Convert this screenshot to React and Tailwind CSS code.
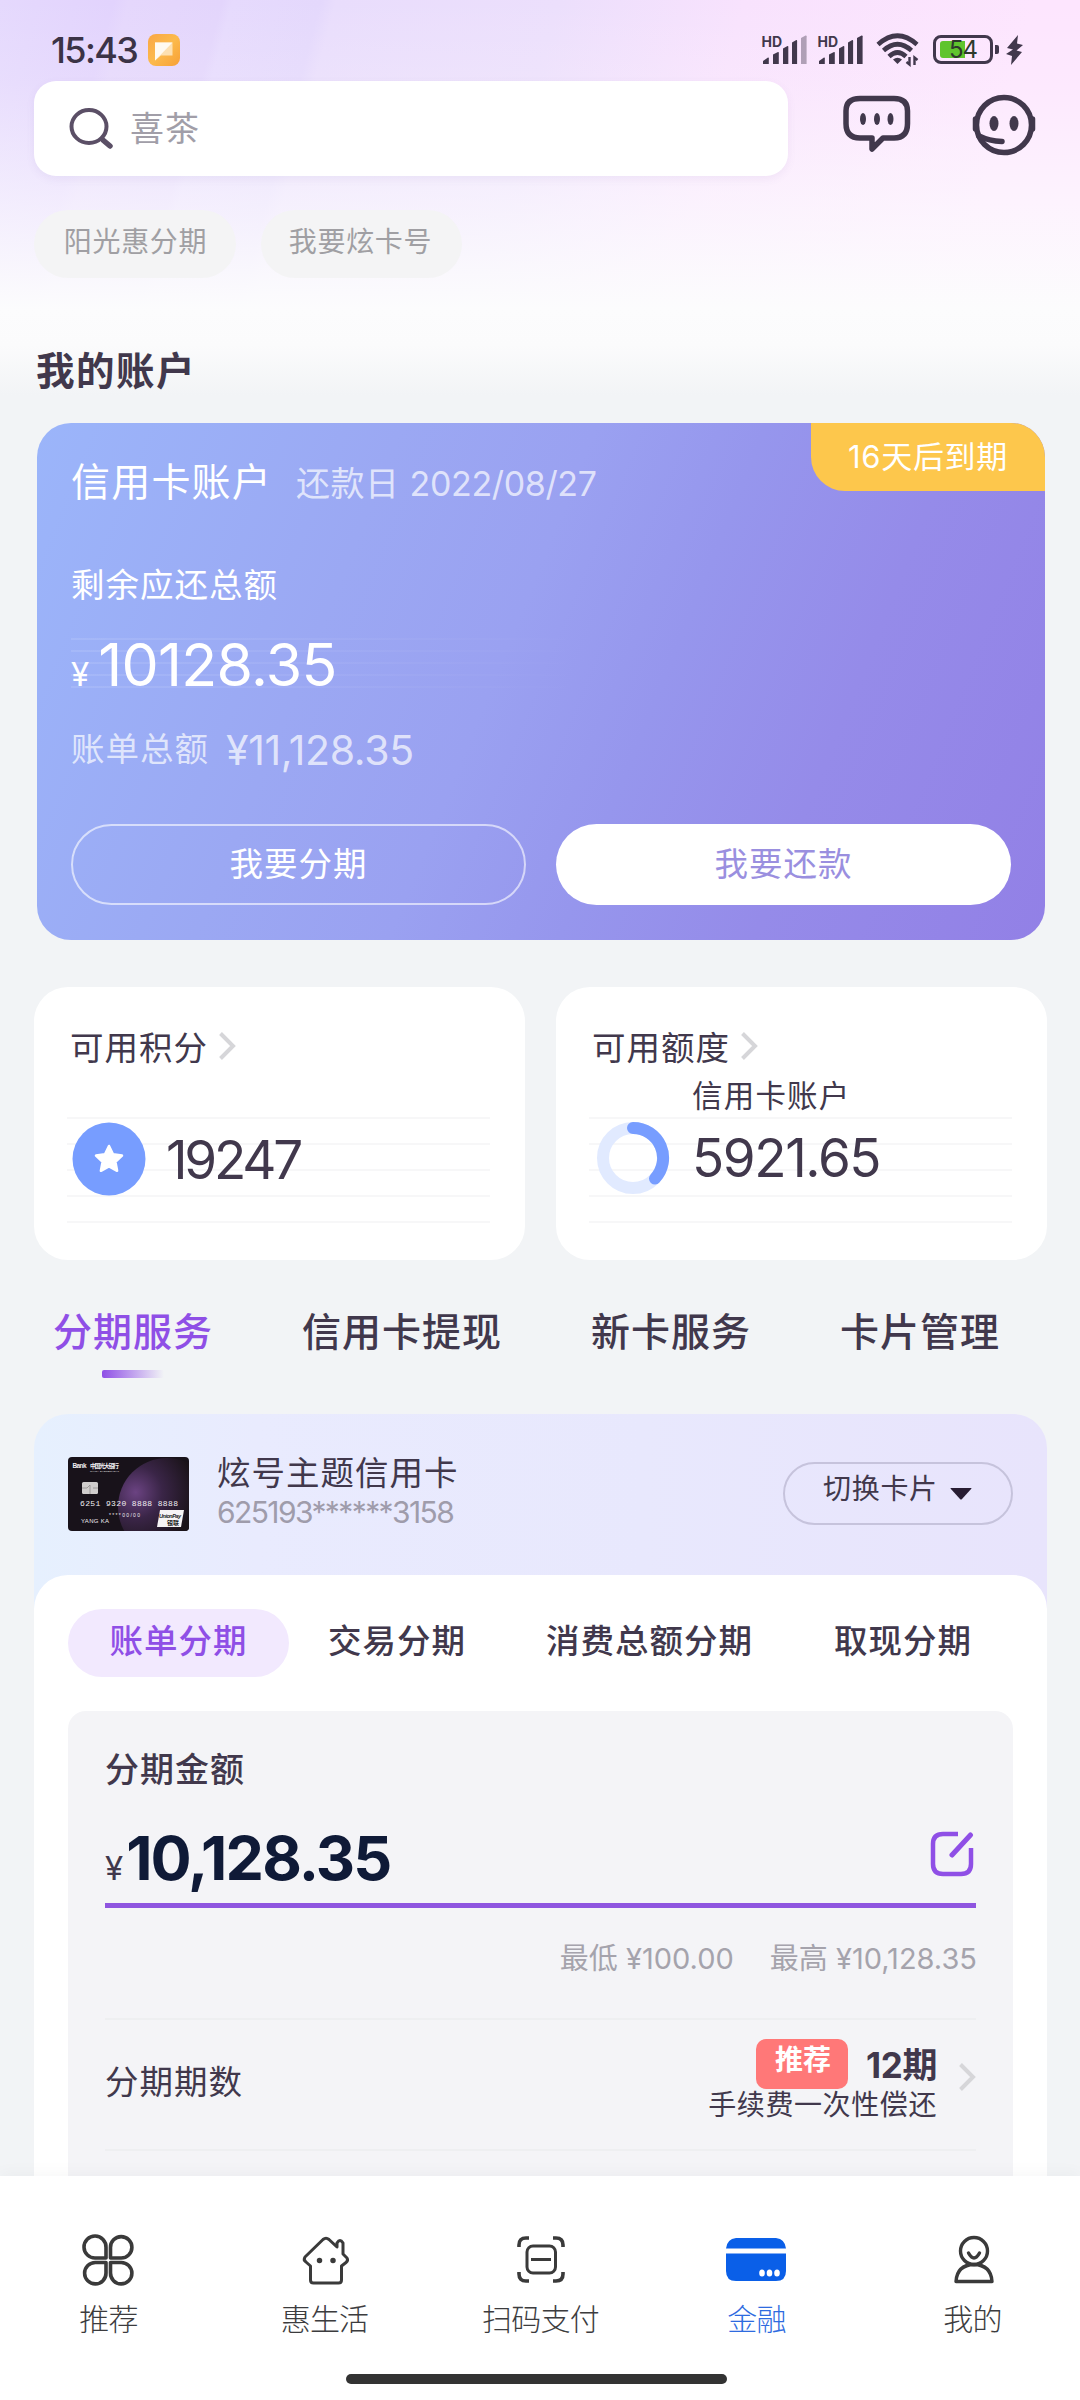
import React from "react";

const INK = "#41384c";

function SignalIcon({ full }) {
  return (
    <svg className="overflow-visible" width="46" height="32" viewBox="0 0 46 32" fill={INK}>
      <text x="0.500" y="13" fontSize="14" fontWeight="700" fontFamily="Inter, sans-serif" textLength="20.500">HD</text>
      <path d="M2 27l5-3.500q.8-.3.8.8V30H2z" />
      <path d="M12 20.500l5-2.500q.8-.2.8.8V30H12z" />
      <path d="M22 14.500l4.500-2.500q.8-.2.8.8V30H22z" />
      <path d="M31 8.500l4.300-2.500q.8-.2.8.8V30H31z" />
      <path d="M40 4l4.600-2.500q1-.2 1 .8V30H40z" opacity={full ? 1 : 0.4} />
    </svg>
  );
}

function WifiIcon() {
  return (
    <svg width="44" height="34" viewBox="0 0 44 34" fill="none" stroke={INK} strokeWidth="4.600">
      <path d="M2 11.500Q21.500-6 41 11.500" />
      <path d="M7.500 17.500Q21.500 5 35.500 17.500" />
      <path d="M13 23.500Q21.500 15.500 30 23.500" />
      <path d="M21.500 31l-4.500-4.500Q21.500 23 26 26.500z" fill={INK} stroke="none" />
      <path d="M33.500 24v7.500l-3-2.500M38.500 32v-7.500l3 2.500" strokeWidth="2.400" />
    </svg>
  );
}

function StatusBar() {
  return (
    <div className="flex h-[81px] items-center pt-[18px] pl-[51px]">
      <span className="w-[97px] text-[36px] leading-none font-medium tracking-[-1.6px] text-[#3b3346]">15:43</span>
      <svg width="32" height="32" viewBox="0 0 32 32">
        <defs>
          <linearGradient id="note" x1="0" y1="0" x2="1" y2="1">
            <stop offset="0" stopColor="#f9a745" />
            <stop offset=".5" stopColor="#fcba4c" />
            <stop offset="1" stopColor="#f7a036" />
          </linearGradient>
        </defs>
        <rect width="32" height="32" rx="8" fill="url(#note)" />
        <path d="M7 8.500h17.500V21.500H13L7 26.500z" fill="#fde0b0" />
        <path d="M7 8.500h17.500L7 26.500z" fill="#fffaf0" />
      </svg>
      <div className="ml-[581px] flex items-center">
        <SignalIcon />
        <span className="w-[10px]" />
        <SignalIcon full />
        <span className="w-[13px]" />
        <WifiIcon />
        <div className="relative ml-[13px] flex h-[29px] w-[60px] items-center rounded-[8px] border-[3px] border-[#41384c] pl-[4px]">
          <span className="h-[17px] w-[25px] rounded-l-[3px] bg-[#5fc42d]" />
          <span className="absolute inset-0 flex items-center justify-center text-[24px] leading-none tracking-[-1px] text-[#2d3a2b]">54</span>
        </div>
        <span className="ml-[2px] h-[9px] w-[4px] rounded-r-[2px] bg-[#41384c]" />
        <svg className="ml-[7px]" width="17" height="30" viewBox="0 0 17 30" fill={INK}>
          <path d="M12 0L1 13l6 1.500L0 19l6 2L5 30 16 17l-5.500-1.500L17 10l-6-1.500z" />
        </svg>
      </div>
    </div>
  );
}

function SearchRow() {
  return (
    <div className="flex h-[95px] items-start">
      <div className="ml-[34px] flex h-[95px] w-[754px] items-center rounded-[22px] bg-white pl-[35px] shadow-[0_3px_8px_rgba(120,90,170,0.08)]">
        <svg width="45" height="42" viewBox="0 0 45 42" fill="none" stroke="#5b4f66" strokeLinecap="round">
          <ellipse cx="20" cy="18.500" rx="17.500" ry="16.500" strokeWidth="4" />
          <path d="M34.500 32.500l6.500 5.500" strokeWidth="5.500" />
        </svg>
        <span className="ml-[16px] text-[34px] leading-none tracking-[1px] text-[#a19ea8]">喜茶</span>
      </div>
      <svg className="mt-[14px] ml-[55px]" width="68" height="60" viewBox="0 0 68 60" fill="none" stroke={INK} strokeWidth="5.500" strokeLinejoin="round">
        <path d="M17 3.500h34Q64.500 3.500 64.500 16v12.500Q64.500 43 51 43H40L29 54V43H17Q3 43 3 28.500V16Q3 3.500 17 3.500z" />
        <g fill={INK} stroke="none">
          <ellipse cx="20" cy="24" rx="3" ry="6" />
          <ellipse cx="34" cy="24" rx="3" ry="6" />
          <ellipse cx="47.500" cy="24" rx="3" ry="6" />
        </g>
      </svg>
      <svg className="mt-[12px] ml-[61px]" width="64" height="64" viewBox="0 0 64 64" fill="none" stroke={INK} strokeWidth="5.500" strokeLinecap="round">
        <circle cx="32" cy="32" r="27.500" />
        <path d="M3.500 26v10M60.500 26v10" />
        <path d="M7 43q10 5 23 5.500" />
        <g fill={INK} stroke="none">
          <ellipse cx="22" cy="30.500" rx="4.500" ry="7.500" />
          <ellipse cx="42" cy="30.500" rx="4.500" ry="7.500" />
        </g>
      </svg>
    </div>
  );
}

function Chevron() {
  return (
    <svg width="17" height="28" viewBox="0 0 17 28" fill="none" stroke="#d6d6d9" strokeWidth="4">
      <path d="M1.500 1.500L14 14 1.500 26.500" />
    </svg>
  );
}

function AccountCard() {
  return (
    <section className="relative mt-[23px] ml-[37px] flex h-[517px] w-[1008px] flex-col overflow-hidden rounded-[34px] bg-[linear-gradient(112deg,#9bb5fa_0%,#9ba8f3_30%,#9aa1f1_46%,#9696ed_60%,#958be9_76%,#9280e6_100%)] px-[34px] text-white">
      <div className="absolute top-0 right-0 flex h-[68px] w-[234px] items-center justify-center rounded-bl-[34px] bg-[#fdc74c] pb-[2px] text-[31px] leading-none tracking-[0.700px]">16天后到期</div>
      <div className="mt-[28px] flex h-[60px] items-center leading-none">
        <span className="text-[39px] tracking-[1.200px]">信用卡账户</span>
        <span className="mt-[5px] ml-[24px] text-[34px] tracking-[0.500px] text-white/70">还款日</span>
        <span className="mt-[5px] ml-[10px] text-[34px] tracking-[-0.350px] text-white/70">2022/08/27</span>
      </div>
      <div className="mt-[45px] flex h-[60px] items-center text-[33.500px] leading-none tracking-[1px]">剩余应还总额</div>
      <div className="relative flex h-[100px] items-center pb-[3px]">
        <div className="absolute top-[22px] left-0 flex w-[520px] flex-col gap-[10px]">
          <span className="h-[2px] bg-[linear-gradient(to_right,rgba(255,255,255,0.1),rgba(255,255,255,0))]" />
          <span className="h-[2px] bg-[linear-gradient(to_right,rgba(255,255,255,0.1),rgba(255,255,255,0))]" />
          <span className="h-[2px] bg-[linear-gradient(to_right,rgba(255,255,255,0.1),rgba(255,255,255,0))]" />
          <span className="h-[2px] bg-[linear-gradient(to_right,rgba(255,255,255,0.1),rgba(255,255,255,0))]" />
          <span className="h-[2px] bg-[linear-gradient(to_right,rgba(255,255,255,0.1),rgba(255,255,255,0))]" />
        </div>
        <div className="relative flex items-baseline leading-none">
          <span className="text-[33px]">¥</span>
          <span className="ml-[9px] text-[59px] tracking-[-0.700px]">10128.35</span>
        </div>
      </div>
      <div className="mt-[4px] flex h-[60px] items-center leading-none text-white/70">
        <span className="text-[33.500px] tracking-[1px]">账单总额</span>
        <span className="ml-[17px] text-[41px] tracking-[-0.350px]">¥11,128.35</span>
      </div>
      <div className="mt-[44px] flex gap-[30px] text-[33.500px] leading-none tracking-[1px]">
        <button className="h-[81px] w-[455px] rounded-full border-2 border-white/60">我要分期</button>
        <button className="h-[81px] w-[455px] rounded-full bg-white text-[#9a8fdf]">我要还款</button>
      </div>
    </section>
  );
}

function StatCard({ title, children }) {
  return (
    <div className="relative flex h-[273px] w-[491px] flex-col rounded-[34px] bg-white pl-[36px] text-[#41384c]">
      <div className="absolute top-[130px] left-[33px] flex w-[423px] flex-col gap-[24px]">
        <span className="h-[2px] bg-[#f7f7f8]" />
        <span className="h-[2px] bg-[#f7f7f8]" />
        <span className="h-[2px] bg-[#f7f7f8]" />
        <span className="h-[2px] bg-[#f7f7f8]" />
        <span className="h-[2px] bg-[#f7f7f8]" />
      </div>
      <div className="relative mt-[37px] flex h-[50px] items-center gap-[11px] text-[33.500px] leading-none tracking-[1px]">
        <span>{title}</span>
        <span className="mb-[6px]"><Chevron /></span>
      </div>
      {children}
    </div>
  );
}

function Stats() {
  return (
    <div className="mt-[47px] ml-[34px] flex gap-[31px]">
      <StatCard title="可用积分">
        <div className="relative mt-[45px] ml-[2px] flex h-[80px] items-center">
          <svg width="74" height="74" viewBox="0 0 74 74">
            <circle cx="37" cy="37" r="36.500" fill="#779dff" />
            <path d="M37 24l4 8.300 9 1.200-6.600 6.300 1.700 9L37 44.500l-8.100 4.300 1.700-9L24 33.500l9-1.200z" fill="#fff" stroke="#fff" strokeWidth="2.500" strokeLinejoin="round" />
          </svg>
          <span className="mt-[2px] ml-[20px] text-[53px] leading-none tracking-[-3.200px]">19247</span>
        </div>
      </StatCard>
      <StatCard title="可用额度">
        <div className="relative mt-[3px] flex h-[120px] items-end">
          <svg className="mb-[2px] ml-[4px]" width="74" height="74" viewBox="0 0 74 74" fill="none" strokeWidth="12">
            <circle cx="37" cy="37" r="30" stroke="#e1eaff" />
            <path d="M37 7A30 30 0 0 1 59 57.500" stroke="#779dff" strokeLinecap="round" />
          </svg>
          <div className="mb-[12px] ml-[22px] flex flex-col leading-none">
            <span className="text-[30.500px] tracking-[1.200px]">信用卡账户</span>
            <span className="mt-[21px] text-[53px] tracking-[-1.400px]">5921.65</span>
          </div>
        </div>
      </StatCard>
    </div>
  );
}

function ServiceTabs() {
  return (
    <div className="mt-[41px] flex h-[77px] justify-between pr-[80px] pl-[53px] text-[39px] leading-none font-medium tracking-[1px] text-[#41384c]">
      <div className="flex flex-col">
        <span className="flex h-[60px] items-center text-[#8f4fe6]">分期服务</span>
        <span className="mt-[9px] ml-[49px] h-[8px] w-[62px] rounded-[2px] bg-[linear-gradient(to_right,#8f4fe6,rgba(143,79,230,0))]" />
      </div>
      <span className="flex h-[60px] items-center">信用卡提现</span>
      <span className="flex h-[60px] items-center">新卡服务</span>
      <span className="flex h-[60px] items-center">卡片管理</span>
    </div>
  );
}

function BankCard() {
  return (
    <svg width="121" height="74" viewBox="0 0 121 74" fontFamily="'Liberation Sans', 'Noto Sans CJK SC', sans-serif">
      <defs>
        <radialGradient id="orb" cx=".18" cy=".35" r=".6">
          <stop offset="0" stopColor="#6b4382" />
          <stop offset=".45" stopColor="#3a2547" />
          <stop offset="1" stopColor="#1a1319" />
        </radialGradient>
        <clipPath id="plastic"><rect width="121" height="74" rx="4" /></clipPath>
      </defs>
      <g clipPath="url(#plastic)">
        <rect width="121" height="74" fill="#18121a" />
        <circle cx="99" cy="50" r="49" fill="url(#orb)" />
        <g fill="#f0edf0">
          <text x="4.500" y="11" fontSize="6.500" fontWeight="700" textLength="14">Bank</text>
          <text x="22" y="11" fontSize="6" fontWeight="700" textLength="29">中国光大银行</text>
          <text x="22" y="15" fontSize="2.500" textLength="29">CHINA EVERBRIGHT</text>
          <rect x="14" y="25" width="16" height="12" rx="1.500" fill="#d0cdcd" />
          <path d="M14 31h5l3-3v9M30 31h-5" fill="none" stroke="#8f8b8b" strokeWidth=".8" />
          <text x="12" y="48.500" fontSize="8" fontFamily="'Liberation Mono', monospace" textLength="98">6251 9320 8888 8888</text>
          <text x="41" y="60" fontSize="5" textLength="31">****00/00</text>
          <text x="13" y="66" fontSize="6" textLength="28">YANG KA</text>
        </g>
        <path d="M92 53h24l-3 17H89z" fill="#f6f4f5" />
        <text x="91" y="61" fontSize="5.500" fontWeight="700" fontStyle="italic" fill="#222" textLength="22">UnionPay</text>
        <text x="99" y="68" fontSize="6" fontWeight="700" fill="#222">银联</text>
      </g>
    </svg>
  );
}

function Installment() {
  return (
    <section className="mt-[36px] ml-[34px] flex min-h-0 w-[1013px] flex-1 flex-col overflow-hidden rounded-t-[34px] bg-[linear-gradient(to_right,#e6f0fe_0%,#e9ebfe_22%,#e8e8fd_60%,#e8e4fc_100%)] text-[#41384c]">
      <div className="flex h-[161px] shrink-0 items-start pl-[34px]">
        <div className="mt-[43px]"><BankCard /></div>
        <div className="mt-[40px] ml-[28px] flex w-[566px] flex-col leading-none">
          <span className="flex h-[40px] items-center text-[33.500px] tracking-[1px]">炫号主题信用卡</span>
          <span className="flex h-[36px] items-center text-[30px] tracking-[-1.600px] text-[#9f9cab]">625193******3158</span>
        </div>
        <button className="mt-[48px] flex h-[63px] w-[230px] items-center rounded-full border-2 border-[#c6c3dc] pb-[10px] pl-[38px] text-[28px] leading-none tracking-[0.700px]">
          切换卡片
          <svg className="mt-[10px] ml-[12px]" width="22" height="12" viewBox="0 0 22 12" fill="#281d33"><path d="M1 0h20q1 0 .3.800L12 11q-1 1-2 0L.7.800Q0 0 1 0z" /></svg>
        </button>
      </div>
      <div className="flex min-h-0 flex-1 flex-col rounded-t-[34px] bg-white px-[34px] pt-[34px]">
        <div className="flex h-[68px] shrink-0 items-center text-[33.500px] leading-none font-medium tracking-[1px]">
          <span className="flex h-[68px] w-[221px] items-center justify-center rounded-full bg-[#f2e9fe] pb-[2px] text-[#8f4fe6]">账单分期</span>
          <span className="ml-[39px] pb-[2px]">交易分期</span>
          <span className="ml-[80px] pb-[2px]">消费总额分期</span>
          <span className="ml-[81px] pb-[2px]">取现分期</span>
        </div>
        <div className="mt-[34px] flex min-h-0 flex-1 flex-col rounded-t-[18px] bg-[#f4f4f7] px-[37px] leading-none">
          <div className="mt-[34px] flex h-[50px] shrink-0 items-center text-[34px] font-medium tracking-[1px]">分期金额</div>
          <div className="flex h-[113px] shrink-0 items-end justify-between border-b-[5px] border-[#8f55e0]">
            <div className="flex items-baseline pb-[14px]">
              <span className="text-[33px]">¥</span>
              <span className="ml-[3px] text-[61px] font-bold tracking-[-1.850px] text-[#0f1a37]">10,128.35</span>
            </div>
            <svg className="mr-[2px] mb-[26px]" width="44" height="46" viewBox="0 0 44 46" fill="none" stroke="#8f4fe6" strokeWidth="4.500">
              <path d="M28 3H13Q3 3 3 13v20Q3 43 13 43h18Q41 43 41 33V17" />
              <path d="M40.500 4L22 24" strokeWidth="5" strokeLinecap="round" />
            </svg>
          </div>
          <div className="flex h-[110px] shrink-0 items-center justify-end pb-[9px] text-[29px] text-[#a5a3ac]">
            <span>最低 ¥100.00</span>
            <span className="mr-[-1px] ml-[36px]">最高 ¥10,128.35</span>
          </div>
          <div className="flex h-[133px] shrink-0 items-center justify-between border-y-2 border-[#eeeff1]">
            <span className="mt-[-4px] text-[33.500px] tracking-[1px]">分期期数</span>
            <div className="mt-[-9px] flex items-center">
              <div className="flex flex-col items-end">
                <div className="flex h-[50px] items-center">
                  <span className="flex h-[50px] w-[92px] items-center justify-center rounded-[10px] bg-[#ff7878] pb-[8px] pl-[2px] text-[28px] font-bold text-white">推荐</span>
                  <span className="ml-[18px] pt-[2px] text-[35px] font-bold tracking-[-0.400px]">12期</span>
                </div>
                <span className="flex h-[32px] items-center text-[28px] tracking-[0.600px]">手续费一次性偿还</span>
              </div>
              <span className="mt-[-6px] ml-[22px]"><Chevron /></span>
            </div>
          </div>
        </div>
      </div>
    </section>
  );
}

const STROKE = { fill: "none", stroke: "#3a3a3a", strokeWidth: 3.6, strokeLinecap: "round", strokeLinejoin: "round" };

const NAV = [
  {
    label: "推荐",
    icon: (
      <svg width="52" height="52" viewBox="0 0 52 52" {...STROKE}>
        <path d="M24 24H13.500A11 11 0 1 1 24 13.500z" />
        <path d="M28.500 24V13.500A10.700 10.700 0 1 1 39 24z" />
        <path d="M24 28.500v10.500A10.700 10.700 0 1 1 13.500 28.500z" />
        <path d="M28.500 28.500H39A10.700 10.700 0 1 1 28.500 39z" />
      </svg>
    ),
  },
  {
    label: "惠生活",
    icon: (
      <svg className="ml-[4px]" width="52" height="52" viewBox="0 0 52 52" {...STROKE} strokeWidth="3">
        <path d="M5 23L23 5.500q3-2.500 6 0l8 7.500V9q3-5 6 0v11l4 4q1.500 2.500-1 4.500l-4.500 3.500v14q0 3-3 3H13.500q-3 0-3-3V32L6 28q-3-2-1-5z" />
        <circle cx="19.500" cy="26.500" r="2" fill="#3a3a3a" strokeWidth="1.500" />
        <circle cx="33" cy="26.500" r="2" fill="#3a3a3a" strokeWidth="1.500" />
      </svg>
    ),
  },
  {
    label: "扫码支付",
    icon: (
      <svg className="ml-[1px]" width="52" height="52" viewBox="0 0 52 52" {...STROKE} strokeLinecap="butt">
        <path d="M4 13V11q0-7 7-7h3M38 4h3q7 0 7 7v2M48 38v2q0 7-7 7h-3M14 47h-3q-7 0-7-7v-2" />
        <rect x="12" y="12" width="28.500" height="27" rx="6" strokeWidth="3" />
        <path d="M16 25.500h20" strokeWidth="3" />
      </svg>
    ),
  },
  {
    label: "金融",
    active: true,
    icon: (
      <svg width="60" height="52" viewBox="0 0 60 52" fill="#0a5fe8">
        <path d="M10 4h40q9 1 10 10.500H0Q1 5 10 4zM0 19.500h60V37q0 10-10 10H10Q0 47 0 37z" />
        <g fill="#fff">
          <ellipse cx="36" cy="39" rx="2.800" ry="3.500" />
          <ellipse cx="43.500" cy="39" rx="2.800" ry="3.500" />
          <ellipse cx="51" cy="39" rx="2.800" ry="3.500" />
        </g>
      </svg>
    ),
  },
  {
    label: "我的",
    icon: (
      <svg className="ml-[3px]" width="52" height="52" viewBox="0 0 52 52" {...STROKE} strokeWidth="3.400">
        <circle cx="26" cy="17" r="13.500" />
        <path d="M20.500 19q5.500 10 11 0" />
        <path d="M8 47.500Q9 31 26 30.500 43 31 44 47.500z" />
      </svg>
    ),
  },
];

function BottomNav() {
  return (
    <nav className="relative flex h-[224px] shrink-0 flex-col items-center bg-white shadow-[0_-4px_14px_rgba(0,0,0,0.03)]">
      <div className="flex h-[198px] w-full">
        {NAV.map((n) => (
          <div key={n.label} className={"flex flex-1 flex-col items-center pt-[58px] text-[30px] leading-none font-light tracking-[-0.800px] " + (n.active ? "text-[#2e6bdf]" : "text-[#3c3c3e]")}>
            {n.icon}
            <span className="mt-[18px] ml-[1px]">{n.label}</span>
          </div>
        ))}
      </div>
      <span className="ml-[-7px] h-[10px] w-[381px] rounded-full bg-[#333]" />
    </nav>
  );
}

export default function App() {
  return (
    <div className="flex h-[2400px] w-[1080px] flex-col overflow-hidden bg-[#f2f4f6] bg-[linear-gradient(to_bottom,rgba(255,255,255,0)_0px,rgba(253,252,254,0.150)_80px,rgba(253,252,254,0.600)_200px,#fcfcfd_310px,#fbfbfc_345px,#f2f4f6_395px),linear-gradient(105deg,#e5d9fd_0px,#e2d3fd_110px,#e5d7fc_125px,#e3d5fc_215px,#e6dafd_225px,#e4d8fc_310px,#e9ddfc_325px,#ecdffc_540px,#f8e2fd_720px,#fde5fe_1000px)] font-[Inter,'Noto_Sans_CJK_SC',sans-serif]">
      <StatusBar />
      <SearchRow />
      <div className="mt-[34px] ml-[34px] flex gap-[25px] text-[28px] leading-none tracking-[0.700px] text-[#a09fa3]">
        <span className="flex h-[68px] w-[202px] items-center justify-center rounded-full bg-[#f4f4f5] pb-[4px] pl-[1px]">阳光惠分期</span>
        <span className="flex h-[68px] w-[201px] items-center justify-center rounded-full bg-[#f4f4f5] pr-[2px] pb-[4px]">我要炫卡号</span>
      </div>
      <h1 className="mt-[63px] ml-[36px] flex h-[60px] shrink-0 items-center text-[38.500px] leading-none font-bold tracking-[1.500px] text-[#41384c]">我的账户</h1>
      <div className="mt-[-1px]">
        <AccountCard />
      </div>
      <Stats />
      <ServiceTabs />
      <Installment />
      <BottomNav />
    </div>
  );
}
